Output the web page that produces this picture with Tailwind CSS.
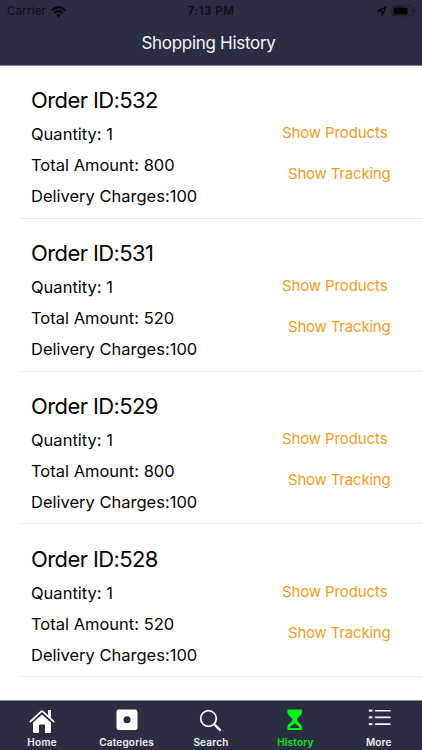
<!DOCTYPE html>
<html lang="en">
<head>
<meta charset="utf-8">
<title>Shopping History</title>
<script src="https://cdn.jsdelivr.net/npm/@tailwindcss/browser@4"></script>
</head>
<body class="w-[422px] h-[750px] overflow-hidden bg-white font-['Inter','Liberation_Sans',sans-serif]">
<div class="flex flex-col h-[750px]">
  <header class="h-[66px] shrink-0 bg-[#2b2e43] border-b border-[#84869a]">
    <div class="h-[22px] grid grid-cols-3 items-center text-[11.5px] text-[#0b0d16]">
      <div class="flex items-center gap-[5px] pl-[7px] pt-px">
        <span class="tracking-[0.2px]">Carrier</span>
        <svg class="w-[15px] h-[12px]" viewBox="0 0 15 12" fill="none" stroke="#05060c" stroke-width="2"><path d="M.8 4.4Q7.5-1.6 14.2 4.4M3.2 7Q7.5 3.2 11.8 7"/><path d="M5.2 9Q7.5 7 9.8 9L7.5 11.5Z" fill="#05060c" stroke="none"/></svg>
      </div>
      <div class="text-center font-semibold tracking-[0.5px] pt-px">7:13 PM</div>
      <div class="flex justify-end items-center pr-[6px] gap-[4px]">
        <svg class="w-[10px] h-[10px]" viewBox="0 0 10 10" fill="none" stroke="#05060c" stroke-width="1.3" stroke-linejoin="round"><path d="M.9 4.900 9 1 5.200 9.200 4.800 5.200Z"/></svg>
        <svg class="w-[25px] h-[12px]" viewBox="0 0 25 12"><rect x=".8" y=".8" width="21.500" height="10" rx="3" fill="none" stroke="#1b1d2c"/><rect x="2.500" y="2.400" width="14" height="7" rx="1.500" fill="#010104"/><path d="M23.500 4v4q1.400-.5 1.400-2t-1.400-2Z" fill="#1b1d2c"/></svg>
      </div>
    </div>
    <h1 class="h-[43px] pr-[5px] flex items-center justify-center text-[17px] tracking-[-0.3px] text-[#f3f4f8]">Shopping History</h1>
  </header>

  <main id="orders" class="h-[634px] shrink-0 overflow-hidden"></main>

  <nav class="h-[50px] shrink-0 bg-[#2b2e43] border-t border-[#84869a] grid grid-cols-5 text-[10px] font-semibold text-[#f0f1f6] text-center">
    <div class="flex flex-col items-center pt-[8px]">
      <svg class="w-[26px] h-[26px]" viewBox="0 0 26 26"><path d="M4 13.4 13 5.6l9 7.8v9q0 1.6-1.6 1.6H16v-7.5q0-1-1-1h-4q-1 0-1 1V24H5.6Q4 24 4 22.4Z" fill="#fff"/><path d="M1 12.5 11.9 2.4q1.1-.9 2.2 0L25 12.5" fill="none" stroke="#2b2e43" stroke-width="4"/><path d="M19 1h3v8.2l-3-2.8Z" fill="#fff"/><path d="M1.3 12.6 12.1 2.6q.9-.7 1.8 0l10.8 10" fill="none" stroke="#fff" stroke-width="1.800" stroke-linecap="round"/></svg>
      <span class="leading-[15px] tracking-[0.3px]">Home</span>
    </div>
    <div class="flex flex-col items-center pt-[8px]">
      <svg class="w-[26px] h-[26px]" viewBox="0 0 26 26"><path fill-rule="evenodd" fill="#fff" d="M5 .5h16q2.500 0 2.500 2.500v15.500q0 2.500-2.500 2.500H5q-2.500 0-2.500-2.500V3Q2.500.5 5 .5ZM13 7.300a3.500 3.500 0 1 0 0 7 3.500 3.500 0 1 0 0-7Z"/></svg>
      <span class="leading-[15px] tracking-[0.2px]">Categories</span>
    </div>
    <div class="flex flex-col items-center pt-[8px]">
      <svg class="w-[26px] h-[26px]" viewBox="0 0 26 26" fill="none" stroke="#fff"><circle cx="10.500" cy="9.500" r="7.800" stroke-width="1.700"/><path d="m16.300 15.300 5.600 5.600" stroke-width="2.500" stroke-linecap="round"/></svg>
      <span class="leading-[15px] tracking-[0.2px]">Search</span>
    </div>
    <div class="flex flex-col items-center pt-[8px] text-[#00e91a]">
      <svg class="w-[26px] h-[26px]" viewBox="0 0 26 26"><path fill="#00f812" fill-rule="evenodd" d="M6.200.5h13q.8 0 .8.800v2.200c0 3-5 5-5 7.300s5 4.300 5 7.300v2.200q0 .8-.8.8h-13q-.8 0-.8-.8v-2.200c0-3 5-5 5-7.300s-5-4.300-5-7.300V1.300q0-.8.800-.8ZM12.700 13.800c-.5 1.900-4.800 3-4.800 5.300h9.600c0-2.300-4.300-3.400-4.800-5.300Z"/></svg>
      <span class="leading-[15px] tracking-[0.2px]">History</span>
    </div>
    <div class="flex flex-col items-center pt-[8px]">
      <svg class="w-[26px] h-[26px]" viewBox="0 0 26 26" fill="none" stroke="#f5f6fb" stroke-linecap="round"><path stroke-width="1.600" d="M8.500 1.700H23M8.500 8.400H23M8.500 15.100H23"/><path stroke-width="2.300" d="M2.800 1.700h1.600M2.800 8.400h1.600M2.800 15.100h1.600"/></svg>
      <span class="leading-[15px] tracking-[0.2px] pr-[2px]">More</span>
    </div>
  </nav>
</div>
<script>
const orders = [[532, 800], [531, 520], [529, 800], [528, 520]];
document.getElementById('orders').innerHTML = orders.map(([id, total]) => `
  <section class="h-[152.8px] ml-[21px] pl-[10px] pt-[18.4px] flex border-b border-[#e6e6e8] text-[16.5px] text-[#050505] whitespace-nowrap">
    <div class="w-[251px] shrink-0">
      <h2 class="h-[35px] leading-[33px] text-[22px] tracking-[-0.6px]">Order ID:${id}</h2>
      <p class="leading-[31px]">Quantity: 1</p>
      <p class="leading-[31px]">Total Amount: ${total}</p>
      <p class="leading-[31px]">Delivery Charges:100</p>
    </div>
    <div class="pt-[28px] text-[15px] tracking-[-0.12px] text-[#f79c1a]">
      <p class="leading-[41px]">Show Products</p>
      <p class="leading-[41px] pl-[6px] tracking-[-0.2px]">Show Tracking</p>
    </div>
  </section>`).join('');
</script>
</body>
</html>
